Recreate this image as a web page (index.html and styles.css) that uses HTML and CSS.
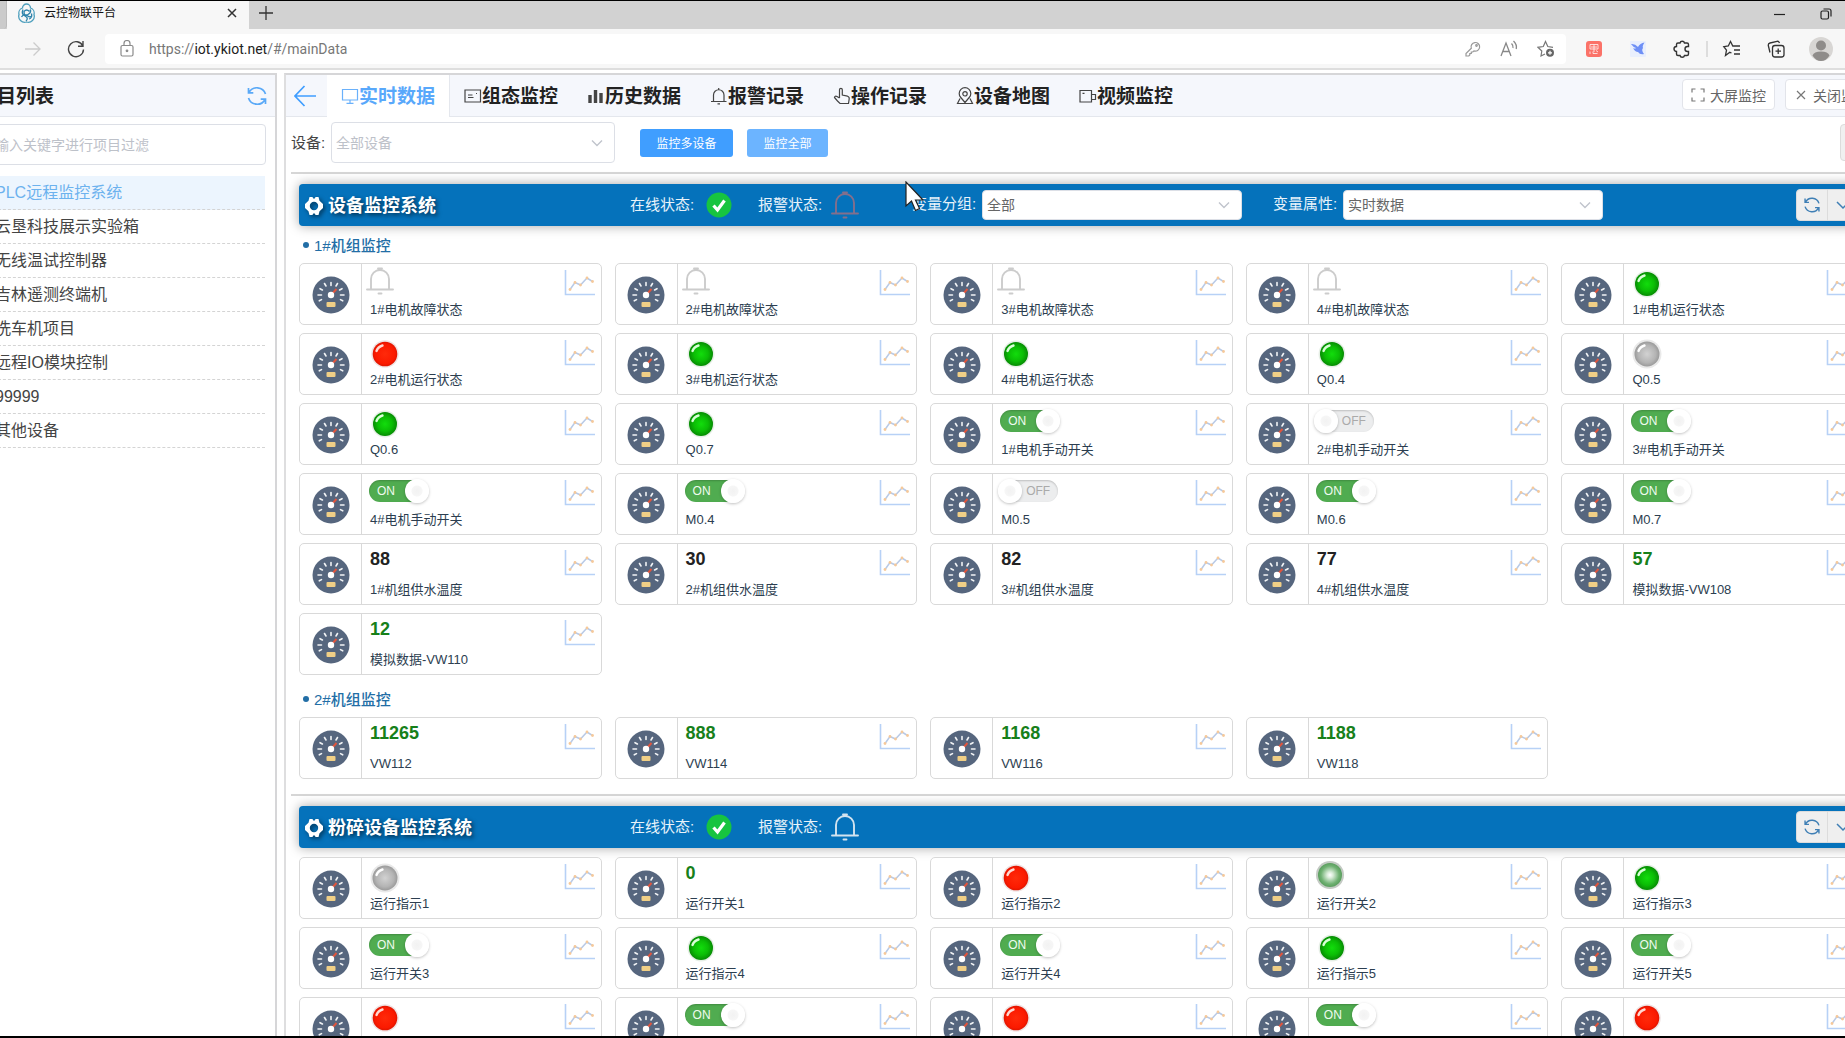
FILE: index.html
```html
<!DOCTYPE html>
<html lang="zh-CN">
<head>
<meta charset="utf-8">
<title>云控物联平台</title>
<link rel="stylesheet" href="styles.css">
</head>
<body>
<svg class="sprite" aria-hidden="true">
  <defs>
    <radialGradient id="g-green"><stop offset="0" stop-color="#12dd0c"/><stop offset=".6" stop-color="#0bbd05"/><stop offset="1" stop-color="#078c04"/></radialGradient>
    <radialGradient id="g-red"><stop offset="0" stop-color="#ff2a0a"/><stop offset=".8" stop-color="#fb1a00"/><stop offset="1" stop-color="#e01500"/></radialGradient>
    <radialGradient id="g-gray"><stop offset="0" stop-color="#d2d2d2"/><stop offset=".7" stop-color="#b4b4b4"/><stop offset="1" stop-color="#9a9a9a"/></radialGradient>
    <radialGradient id="g-soft"><stop offset="0" stop-color="#ffffff"/><stop offset=".25" stop-color="#d9ecd9"/><stop offset=".75" stop-color="#6fb172"/><stop offset="1" stop-color="#5a9e5e"/></radialGradient>
  </defs>
  <symbol id="gauge" viewBox="-19 -19 38 38">
    <circle r="18.500" fill="#56667e"/>
    <g stroke="#f2f4f6" stroke-width="1.600" stroke-linecap="round">
      <path d="M0-9.500V-12.500M-9.500 0H-13M9.500 0H13M-5-9L-6.500-11.500M5-9L6.500-11.500M-8.600-5L-11-6.300M8.600-5L11-6.300M-9.500 4.600L-11.700 5.800M9.500 4.600L11.700 5.800"/>
    </g>
    <path d="M0 0L5.500-6" stroke="#e0553d" stroke-width="2"/>
    <circle r="3.200" fill="#fff"/>
    <rect x="-4.500" y="7" width="9" height="5" rx="1" fill="#f0cf86"/>
  </symbol>
  <symbol id="trend" viewBox="0 0 31 26">
    <path d="M1.500 0V24.500H31" fill="none" stroke="#b7d1f6" stroke-width="1.600"/>
    <path d="M6 19.500L11 12.500L16.500 15L23 8L28.500 11.500" fill="none" stroke="#b9cae6" stroke-width="1.500"/>
    <g fill="#f6c99a"><circle cx="6" cy="19.500" r="1.400"/><circle cx="11" cy="12.500" r="1.400"/><circle cx="16.500" cy="15" r="1.400"/><circle cx="23" cy="8" r="1.400"/><circle cx="28.500" cy="11.500" r="1.400"/></g>
  </symbol>
  <symbol id="bell" viewBox="0 0 28 28">
    <path d="M5 22V12a9 9 0 0 1 18 0V22M1 22.500H27M12 1.500H16M12.500 26.500H15.500" fill="none" stroke="currentColor" stroke-width="1.900" stroke-linecap="round"/>
  </symbol>
  <symbol id="led-green" viewBox="0 0 30 30"><circle cx="15" cy="15" r="13.500" fill="#e6efe6"/><circle cx="15" cy="15" r="12" fill="url(#g-green)"/><path d="M6.500 12a9 9 0 0 1 6-5.500" fill="none" stroke="#d8ffd6" stroke-width="2.400" stroke-linecap="round"/></symbol>
  <symbol id="led-red" viewBox="0 0 30 30"><circle cx="15" cy="15" r="13.800" fill="#efe4e4"/><circle cx="15" cy="15" r="12.300" fill="url(#g-red)"/><path d="M6.500 12a9 9 0 0 1 6-5.500" fill="none" stroke="#ffd9d2" stroke-width="2.400" stroke-linecap="round"/></symbol>
  <symbol id="led-gray" viewBox="0 0 30 30"><circle cx="15" cy="15" r="14.500" fill="#e9e9e9"/><circle cx="15" cy="15" r="12.500" fill="url(#g-gray)"/><path d="M6.500 12a9 9 0 0 1 6-5.500" fill="none" stroke="#fff" stroke-width="2.400" stroke-linecap="round"/></symbol>
  <symbol id="led-soft" viewBox="0 0 30 30"><circle cx="15" cy="15" r="14" fill="#c3cac3"/><circle cx="15" cy="15" r="12" fill="url(#g-soft)"/></symbol>
  <symbol id="refresh" viewBox="0 0 22 22">
    <path d="M3 7.500A9 9 0 0 1 19.500 9M19 14.500A9 9 0 0 1 2.500 13M2.500 3V7.800H7.300M19.500 19V14.200H14.700" fill="none" stroke="currentColor" stroke-width="1.700"/>
  </symbol>
  <symbol id="gear" viewBox="0 0 20 20">
    <path fill="currentColor" fill-rule="evenodd" d="M5.500 1H8.500L9.200 2.600H10.800L11.500 1H14.500L15.500 4.800L19 8V12L15.500 15.200L14.500 19H11.500L10.800 17.400H9.200L8.500 19H5.500L4.500 15.200L1 12V8L4.500 4.800ZM10 5.800A4.200 4.200 0 1 0 10 14.200A4.200 4.200 0 1 0 10 5.800Z"/>
  </symbol>
  <symbol id="ok" viewBox="0 0 26 26"><circle cx="13" cy="13" r="12.500" fill="#17c440"/><path d="M7.500 13.500L11.500 18L18.500 8.500" fill="none" stroke="#fff" stroke-width="3.200"/></symbol>
  <symbol id="down" viewBox="0 0 16 16"><path d="M2 5L8 11L14 5" fill="none" stroke="currentColor" stroke-width="1.500"/></symbol>
</svg>

<header class="browser">
  <div class="tabstrip">
    <div class="prev-tab"></div>
    <div class="tab">
      <svg width="17" height="20" viewBox="0 0 17 20" fill="none" stroke="#4d9fbd" stroke-width="1.300"><path d="M8.500 1A4 4 0 0 1 12.500 5A5.500 5.500 0 0 1 16 11.500A6 6 0 0 1 8.500 19A6 6 0 0 1 1 11.500A5.500 5.500 0 0 1 4.500 5A4 4 0 0 1 8.500 1Z"/><path d="M5 6.500Q3 11 7 13T8 18M12 6.500Q14 9 10 11.500T6 8.500Q8.500 5.500 11.500 8.500M13.500 10.500Q14.500 15 11 16M3.500 14Q6 10 9 12.500T12.500 13" stroke="#2f83ab"/></svg>
      <span class="tab-title">云控物联平台</span>
      <button class="icon-btn" type="button" aria-label="关闭标签页"><svg width="10" height="10" viewBox="0 0 10 10" stroke="#333" stroke-width="1.500"><path d="M1 1L9 9M9 1L1 9"/></svg></button>
    </div>
    <button class="icon-btn new-tab" type="button" aria-label="新建标签页"><svg width="16" height="16" viewBox="0 0 16 16" stroke="#333" stroke-width="1.300"><path d="M8 1V15M1 8H15"/></svg></button>
    <div class="window-buttons">
      <button class="icon-btn" type="button" aria-label="最小化"><svg width="12" height="12" viewBox="0 0 12 12" stroke="#222" stroke-width="1.200"><path d="M0 6.500H11"/></svg></button>
      <button class="icon-btn" type="button" aria-label="还原"><svg width="12" height="12" viewBox="0 0 12 12" fill="none" stroke="#222" stroke-width="1.200"><rect x="1" y="3" width="7.500" height="8" rx="1.500"/><path d="M3.500 1H9A2 2 0 0 1 11 3V8.500"/></svg></button>
    </div>
  </div>
  <div class="toolbar">
    <button class="icon-btn forward" type="button" aria-label="前进"><svg width="18" height="18" viewBox="0 0 18 18" fill="none" stroke="#ccc" stroke-width="1.300"><path d="M1 9H16M9.500 2.500L16 9L9.500 15.500"/></svg></button>
    <button class="icon-btn reload" type="button" aria-label="刷新"><svg width="18" height="18" viewBox="0 0 18 18" fill="none" stroke="#444" stroke-width="1.400"><path d="M15.800 6A7.500 7.500 0 1 0 16.500 9.500M16 1V6.200H11"/></svg></button>
    <div class="address">
      <svg width="14" height="17" viewBox="0 0 14 17" fill="none" stroke="#8a8a8a" stroke-width="1.200"><rect x="1" y="5.500" width="12" height="10.500" rx="1.500"/><path d="M4 5.500V3.500A3 3 0 0 1 10 3.500V5.500"/><circle cx="7" cy="10.800" r=".8" fill="#8a8a8a"/></svg>
      <a class="url" href="#/mainData">https://<b>iot.ykiot.net</b>/#/mainData</a>
      <div class="address-tools">
        <svg width="16" height="16" viewBox="0 0 16 16" fill="none" stroke="#999" stroke-width="1.200"><path d="M6.300 7.300A4.300 4.300 0 1 1 9 9.900L7.800 11H6.300V12.500H4.800V14L3.800 15H1V12.500Z"/><circle cx="11.500" cy="4.500" r=".8"/></svg>
        <svg width="18" height="18" viewBox="0 0 18 18" fill="none" stroke="#888" stroke-width="1.300"><path d="M1 16L6 3L11 16M2.800 11.500H9.200M11.500 3.500Q13.500 5.500 13 8M13.500 1Q17.200 4.500 16.200 9"/></svg>
        <svg width="18" height="18" viewBox="0 0 18 18" fill="none" stroke="#777" stroke-width="1.200"><path d="M8 14L4 16L4.800 11L1 7.300L6.300 6.500L8.500 1.500L10.800 6.500L16 7.300"/><circle cx="13" cy="12.800" r="4" fill="#666" stroke="none"/><path d="M13 10.800V14.800M11 12.800H15" stroke="#fff"/></svg>
      </div>
    </div>
    <div class="extensions">
      <svg width="24" height="24" viewBox="0 0 24 24"><rect x="4" y="4" width="16" height="16" rx="3" fill="#fb7268"/><path d="M8 7.500H16V12H8ZM12 7.500V15M8 14.500V17M11 14.500V16.500H15.500M14 13.500L16 15M9 10H15" fill="none" stroke="#fff" opacity=".75"/></svg>
      <svg width="24" height="24" viewBox="0 0 24 24"><rect x="4" y="4" width="16" height="16" rx="1" fill="#e9effd"/><path d="M5 7Q9 6.500 12 10Q14 6 18.500 5.500Q16 9 17 11Q15 13 18 17Q14 18 12 15Q9 15 7 11Q9 12 10 11Q7.500 10.500 5 7Z" fill="#6e8ff6"/></svg>
      <svg width="24" height="24" viewBox="0 0 24 24" fill="none" stroke="#333" stroke-width="1.400"><path d="M8 6H10A2.300 2.300 0 0 1 14.500 6H17Q18.500 6 18.500 7.500V9.500H17.500A2.400 2.400 0 0 0 17.500 14.500H18.500V17Q18.500 18.500 17 18.500H14.500A2.300 2.300 0 0 1 10 18.500H8Q6.500 18.500 6.500 17V14.500A2.400 2.400 0 0 1 6.500 9.500V7.500Q6.500 6 8 6Z"/></svg>
      <i class="tool-sep"></i>
      <svg width="24" height="24" viewBox="0 0 24 24" fill="none" stroke="#333" stroke-width="1.300"><path d="M11.500 16L9.800 15.300L5.500 18.500L6.500 13.200L3.800 9.700L8.300 9L10.500 4.500L12.800 9H20M14 13H20M14 17H20"/></svg>
      <svg width="24" height="24" viewBox="0 0 24 24" fill="none" stroke="#333" stroke-width="1.300"><rect x="8.500" y="8.500" width="11.500" height="11.500" rx="2.500"/><path d="M14.200 11.500V17M11.500 14.200H17M6 15.500L4.300 8.500Q4 6.500 6 6L13 4.300Q15 4 15.500 6"/></svg>
      <svg width="26" height="26" viewBox="0 0 26 26"><circle cx="13" cy="13" r="12" fill="#d8d6d4"/><circle cx="13" cy="9.500" r="5" fill="#8f8c8a"/><path d="M4.500 19.500Q6 15.500 13 15.500T21.500 19.500Q18 25 13 25T4.500 19.500Z" fill="#8f8c8a"/></svg>
    </div>
  </div>
</header>

<div class="app">
  <aside class="sidebar">
    <div class="side-head">
      <h1>项目列表</h1>
      <button class="icon-btn side-refresh" type="button" aria-label="刷新项目"><svg width="22" height="22"><use href="#refresh"/></svg></button>
    </div>
    <input class="side-search" type="text" placeholder="请输入关键字进行项目过滤" aria-label="项目过滤">
    <ul class="projects">
      <li class="current"><a href="#/p1">PLC远程监控系统</a></li>
      <li><a href="#/p2">云垦科技展示实验箱</a></li>
      <li><a href="#/p3">无线温试控制器</a></li>
      <li><a href="#/p4">吉林遥测终端机</a></li>
      <li><a href="#/p5">洗车机项目</a></li>
      <li><a href="#/p6">远程IO模块控制</a></li>
      <li><a href="#/p7">99999</a></li>
      <li><a href="#/p8">其他设备</a></li>
    </ul>
  </aside>

  <main class="main">
    <div class="main-head">
      <button class="icon-btn back" type="button" aria-label="返回"><svg width="22" height="22" viewBox="0 0 22 22" fill="none" stroke="#409eff" stroke-width="1.700"><path d="M22 11H1M10.500 1L1 11L10.500 21"/></svg></button>
      <nav class="tabs">
        <a class="active" href="#/mainData"><svg viewBox="0 0 18 18"><path d="M1.500 2.500H16.500V13H1.500ZM9 13V16M5.500 16.300H12.500"/></svg>实时数据</a>
        <a href="#/scada"><svg viewBox="0 0 18 18"><path d="M1 3H16.500V15H1ZM4 8H8.500M4 10.500H9.500M12 6.500H13"/></svg>组态监控</a>
        <a href="#/history"><svg viewBox="0 0 18 18"><path d="M3 8V16M8.500 3V16M14 6V16" stroke-width="3.400"/></svg>历史数据</a>
        <a href="#/alarm"><svg viewBox="0 0 18 18"><path d="M3.500 14V8A5.200 5.200 0 0 1 14 8V14M1 14.500H16.500M8.700 1V3M7.500 16.800H10"/></svg>报警记录</a>
        <a href="#/log"><svg viewBox="0 0 18 18"><path d="M6.500 11V2.800A1.400 1.400 0 0 1 9.300 2.800V8L14.500 9.200Q16.500 9.800 16.200 11.800L15.500 16.500H7L4.500 14L1.500 10.500Q2 8.500 4 9.500L6.500 11"/></svg>操作记录</a>
        <a href="#/map"><svg viewBox="0 0 18 18"><path d="M9 15.500L4.800 10.500A5.800 5.800 0 1 1 13.200 10.500ZM4 11.500L1.500 16.500H16.500L14 11.500"/><circle cx="9" cy="6.800" r="2.200"/></svg>设备地图</a>
        <a href="#/video"><svg viewBox="0 0 18 18"><path d="M1 3.500H12.500V15H1ZM12.500 7.500H16.500V12.500H12.500M3.500 6.300H5.500"/></svg>视频监控</a>
      </nav>
      <div class="head-actions">
        <button class="plain" type="button"><svg width="14" height="14" viewBox="0 0 14 14" fill="none" stroke="#777" stroke-width="1.200"><path d="M1 4.500V1H4.500M9.500 1H13V4.500M13 9.500V13H9.500M4.500 13H1V9.500"/></svg>大屏监控</button>
        <button class="plain" type="button"><svg width="14" height="14" viewBox="0 0 14 14" fill="none" stroke="#777" stroke-width="1.200"><path d="M3 3L11 11M11 3L3 11"/></svg>关闭监控</button>
      </div>
    </div>

    <div class="filter">
      <label for="device">设备:</label>
      <select id="device" class="select placeholder"><option>全部设备</option></select>
      <button class="primary" type="button">监控多设备</button>
      <button class="primary soft" type="button">监控全部</button>
      <button class="more" type="button" aria-label="更多"></button>
    </div>

    <section class="device">
      <div class="band">
        <h2><svg width="20" height="20"><use href="#gear"/></svg>设备监控系统</h2>
        <span class="state online">在线状态:<svg width="26" height="26"><use href="#ok"/></svg></span>
        <span class="state alarm ringing">报警状态:<svg width="28" height="28"><use href="#bell"/></svg></span>
        <label for="group">变量分组:</label>
        <select id="group" class="select"><option>全部</option></select>
        <label class="second" for="kind">变量属性:</label>
        <select id="kind" class="select"><option>实时数据</option></select>
        <div class="band-buttons">
          <button type="button" aria-label="刷新"><svg width="18" height="18"><use href="#refresh"/></svg></button>
          <button type="button" aria-label="展开"><svg width="16" height="16"><use href="#down"/></svg></button>
        </div>
      </div>
      <h3>1#机组监控</h3>
      <div class="cards" data-group="unit1"></div>
      <h3>2#机组监控</h3>
      <div class="cards" data-group="unit2"></div>
    </section>

    <section class="device">
      <div class="band">
        <h2><svg width="20" height="20"><use href="#gear"/></svg>粉碎设备监控系统</h2>
        <span class="state online">在线状态:<svg width="26" height="26"><use href="#ok"/></svg></span>
        <span class="state alarm">报警状态:<svg width="28" height="28"><use href="#bell"/></svg></span>
        <div class="band-buttons">
          <button type="button" aria-label="刷新"><svg width="18" height="18"><use href="#refresh"/></svg></button>
          <button type="button" aria-label="展开"><svg width="16" height="16"><use href="#down"/></svg></button>
        </div>
      </div>
      <div class="cards ungrouped" data-group="crusher"></div>
    </section>
  </main>
</div>

<svg class="cursor" width="20" height="32" viewBox="0 0 20 32" aria-hidden="true"><path d="M1 1V25L6.500 20L10.500 29.500L14.500 27.500L10.500 19H18Z" fill="#fff" stroke="#222" stroke-width="1.200"/></svg>
<script src="cards.js"></script>
</body>
</html>
```

FILE: cards.js
```js
// Each entry is [kind, label, value]; kinds: bell, led, switch, num
const groups = {
  unit1: [
    ['bell', '1#电机故障状态'], ['bell', '2#电机故障状态'], ['bell', '3#电机故障状态'], ['bell', '4#电机故障状态'], ['led', '1#电机运行状态', 'green'],
    ['led', '2#电机运行状态', 'red'], ['led', '3#电机运行状态', 'green'], ['led', '4#电机运行状态', 'green'], ['led', 'Q0.4', 'green'], ['led', 'Q0.5', 'gray'],
    ['led', 'Q0.6', 'green'], ['led', 'Q0.7', 'green'], ['switch', '1#电机手动开关', true], ['switch', '2#电机手动开关', false], ['switch', '3#电机手动开关', true],
    ['switch', '4#电机手动开关', true], ['switch', 'M0.4', true], ['switch', 'M0.5', false], ['switch', 'M0.6', true], ['switch', 'M0.7', true],
    ['num', '1#机组供水温度', 88, 'dark'], ['num', '2#机组供水温度', 30, 'dark'], ['num', '3#机组供水温度', 82, 'dark'], ['num', '4#机组供水温度', 77, 'dark'], ['num', '模拟数据-VW108', 57],
    ['num', '模拟数据-VW110', 12]
  ],
  unit2: [
    ['num', 'VW112', 11265], ['num', 'VW114', 888], ['num', 'VW116', 1168], ['num', 'VW118', 1188]
  ],
  crusher: [
    ['led', '运行指示1', 'gray'], ['num', '运行开关1', 0], ['led', '运行指示2', 'red'], ['led', '运行开关2', 'soft'], ['led', '运行指示3', 'green'],
    ['switch', '运行开关3', true], ['led', '运行指示4', 'green'], ['switch', '运行开关4', true], ['led', '运行指示5', 'green'], ['switch', '运行开关5', true],
    ['led', '运行指示6', 'red'], ['switch', '运行开关6', true], ['led', '运行指示7', 'red'], ['switch', '运行开关7', true], ['led', '运行指示8', 'red']
  ]
};

const render = {
  bell: () => '<svg class="bell" width="28" height="28"><use href="#bell"/></svg>',
  led: (label, color) => `<svg class="led ${color}" width="30" height="30"><use href="#led-${color}"/></svg>`,
  switch: (label, on) => `<label class="switch"><input type="checkbox" aria-label="${label}"${on ? ' checked' : ''}><span>${on ? 'ON' : 'OFF'}</span></label>`,
  num: (label, value, tone) => `<strong class="num ${tone || ''}">${value}</strong>`
};

document.querySelectorAll('.cards').forEach(box => {
  box.innerHTML = groups[box.dataset.group].map(([kind, label, value, tone]) => `
    <article class="card">
      <div class="card-icon"><svg width="38" height="38"><use href="#gauge"/></svg></div>
      <div class="card-body">
        <div class="reading">${render[kind](label, value, tone)}</div>
        <p>${label}</p>
      </div>
      <a class="trend" href="#/history" aria-label="${label} 趋势"><svg width="31" height="26"><use href="#trend"/></svg></a>
    </article>`).join('');
});
```

FILE: styles.css
```css
* { box-sizing: border-box; }

body {
  margin: 0;
  height: 100vh;
  display: flex;
  flex-direction: column;
  overflow: hidden;
  border-top: 1px solid #000;
  border-bottom: 2px solid #000;
  background: #fff;
  color: #303133;
  font-family: "Liberation Sans", "Noto Sans CJK SC", sans-serif;
}

h1, h2, h3, p, ul { margin: 0; padding: 0; }
button, input, select { font: inherit; }
a { color: inherit; text-decoration: none; }
svg { flex: none; display: block; }
.sprite { width: 0; height: 0; position: absolute; }
.icon-btn { display: flex; padding: 0; border: 0; background: none; }

/* Browser chrome */
.browser { flex: none; border-bottom: 2px solid #dedede; }
.tabstrip { display: flex; height: 28px; background: #d2d2d2; }
.prev-tab { width: 7px; border-right: 1px solid #bbb; background: #cbcbcb; border-radius: 0 0 4px 0; }
.tab { display: flex; align-items: center; width: 242px; padding: 0 12px 4px 11px; background: #f7f7f7; }
.tab-title { flex: 1; padding-left: 9px; font-size: 12px; line-height: 18px; color: #111; }
.new-tab { align-items: center; margin-left: 9px; padding-bottom: 4px; }
.window-buttons { display: flex; align-items: center; gap: 34px; margin-left: auto; padding: 0 13px 3px 0; }
.toolbar { display: flex; align-items: center; height: 39px; padding: 0 11px 0 24px; background: #f7f7f7; }
.reload { margin-left: 25px; }
.address { flex: 1; display: flex; align-items: center; height: 30px; margin-left: 20px; padding: 0 11px 0 15px; border-radius: 4px; background: #fff; }
.url { margin-left: 15px; font: 14px Roboto, "Noto Sans", sans-serif; color: #777; }
.url b { font-weight: 400; color: #222; }
.address-tools { display: flex; align-items: center; gap: 19px; margin-left: auto; }
.extensions { display: flex; align-items: center; gap: 20px; margin-left: 16px; }
.tool-sep { width: 2px; height: 16px; margin: 0 -8px; background: #ddd; }

/* Two panels; both run past the window edges */
.app { flex: 1; min-height: 0; display: flex; gap: 7px; margin: 3px -40px 0 -24px; }
.sidebar { flex: none; width: 301px; border: 2px solid #d6d6d8; border-bottom: 0; }
.main { flex: 1; min-width: 0; border: 2px solid #d6d6d8; border-bottom: 0; border-left-color: #dededf; }

.side-head { display: flex; align-items: center; justify-content: space-between; height: 42px; padding: 0 7px 0 0; border-bottom: 1px solid #e4e7ed; background: #f5f7fc; }
.side-head h1 { padding-top: 2px; font-size: 19px; line-height: 28px; color: #222; }
.side-refresh { color: #5aa9f7; }
.side-search { display: block; width: 310px; height: 41px; margin: 7px 0 0 -22px; padding: 0 24px; border: 1px solid #dcdfe6; border-radius: 4px; font-size: 14px; }
.side-search::placeholder { color: #bdc1c9; opacity: 1; }
.projects { margin: 11px 10px 0 0; list-style: none; }
.projects li { border-bottom: 1px dashed #d4d4d4; font-size: 16px; line-height: 32px; color: #444; }
.projects a { display: block; margin-left: -7px; padding: 1px 0 0 24px; }
.projects .current { background: #ecf5fe; color: #6cb2ee; }

.main-head { display: flex; height: 42px; border-bottom: 1px solid #e4e7ed; background: #f5f7fc; }
.back { align-items: center; width: 41px; padding-left: 8px; }
.tabs { display: flex; height: 42px; }
.tabs a { display: flex; align-items: center; padding: 2px 15px 0 14px; font-size: 19px; font-weight: 700; line-height: 28px; color: #222; white-space: nowrap; }
.tabs svg { width: 18px; height: 18px; margin-bottom: 3px; fill: none; stroke: #444; stroke-width: 1.2px; }
.tabs .active { border-right: 1px solid #e4e7ed; background: #fff; color: #58a8fb; padding-right: 14px; }
.tabs .active svg { stroke: #6ab1fb; }
.head-actions { display: flex; align-items: flex-start; gap: 10px; margin-left: auto; padding: 4px 5px 0 0; }
.plain { display: flex; align-items: center; justify-content: center; gap: 5px; width: 93px; height: 31px; padding: 0; border: 1px solid #e2e4ea; border-radius: 4px; background: #fff; font-size: 14px; color: #666; white-space: nowrap; }

.filter { display: flex; align-items: center; height: 55px; padding: 0 7px 4px 5px; }
.filter label { width: 40px; padding-bottom: 2px; font-size: 15px; color: #444; }
.select {
  appearance: none;
  width: 260px;
  height: 30px;
  padding: 0 12px;
  padding-left: 4px;
  border: 1px solid #dcdfe6;
  border-radius: 4px;
  color: #666;
  font-size: 14px;
  background: #fff url("data:image/svg+xml,%3Csvg xmlns='http://www.w3.org/2000/svg' width='14' height='14' fill='none' stroke='%23c0c4cc' stroke-width='1.400'%3E%3Cpath d='M2 4.500L7 9.500L12 4.500'/%3E%3C/svg%3E") no-repeat right 10px center;
}
.filter .select { width: 284px; height: 41px; color: #bdc1c9; }
.primary { width: 93px; height: 28px; margin-left: 25px; padding: 0; border: 0; border-radius: 3px; background: #409eff; color: #fff; font-size: 12px; }
.primary.soft { width: 81px; margin-left: 14px; background: #6cb4ff; }
.more { width: 36px; height: 37px; margin-left: auto; border: 1px solid #dcdcdc; border-radius: 4px; background: #f0f0f0; }

/* Device sections */
.device { margin: 0 0 15px 5px; padding: 10px 19px 0 8px; border-top: 2px solid #d6d6d6; }
.band { display: flex; align-items: center; height: 42px; padding: 0 5px; border-radius: 4px; background: #0572bb; box-shadow: 0 0 12px rgba(0, 0, 0, .35); color: #e8f3fa; font-size: 15px; line-height: 22px; white-space: nowrap; }
.band h2 { display: flex; align-items: center; gap: 4px; width: 326px; padding-top: 2px; font-size: 18px; line-height: 26px; color: #fff; text-shadow: 2px 2px 4px rgba(0, 0, 0, .6); }
.band h2 svg { filter: drop-shadow(2px 2px 2px rgba(0, 0, 0, .5)); }
.state { display: flex; align-items: center; }
.online { gap: 12px; width: 128px; }
.alarm { gap: 9px; width: 154px; }
.alarm svg { color: #d3e3ef; }
.ringing svg { color: #836f8c; }
.band label { width: 70px; padding-bottom: 2px; }
.band .second { margin-left: 31px; }
.band-buttons { display: flex; margin-left: auto; }
.band-buttons button { display: flex; align-items: center; justify-content: center; width: 32px; height: 32px; padding: 0; border: 1px solid #dcdcdc; background: #efefef; color: #3f7fb5; }
.band-buttons button:first-child { border-radius: 4px 0 0 4px; }
.band-buttons button:last-child { margin-left: -1px; border-radius: 0 4px 4px 0; }

.device h3 { display: flex; align-items: center; gap: 5px; height: 37px; padding-left: 4px; font-size: 15px; font-weight: 500; color: #226ea6; }
.device h3::before { content: ""; width: 6px; height: 6px; border-radius: 3px; background: #226ea6; }
.cards + h3 { margin-top: 5px; }

.cards { display: grid; grid-template-columns: repeat(5, 1fr); gap: 8px 13px; }
.ungrouped { margin-top: 9px; }
.card { display: flex; height: 62px; border: 1px solid #d9d9d9; border-radius: 5px; background: #fff; }
.card-icon { display: flex; align-items: center; justify-content: center; width: 62px; padding-top: 2px; border-right: 1px solid #d9d9d9; }
.card-body { flex: 1; min-width: 0; padding: 1px 0 0 8px; }
.card-body p { font-size: 13px; line-height: 18px; color: #2c3e50; white-space: nowrap; }
.reading { height: 36px; display: flex; align-items: flex-start; }
.bell { margin: 2px 0 0 -4px; color: #ccc; }
.led { margin: 4px 0 0; }
.led.soft { margin: 1px 0 0 -2px; }
.num { padding-top: 4px; font-size: 18px; line-height: 20px; color: #17801a; }
.num.dark { color: #222; }
.trend { padding: 6px 6px 0 0; }

.switch { position: relative; display: flex; align-items: center; width: 58px; height: 22px; margin: 5px 0 0 -1px; }
.switch input {
  appearance: none;
  position: absolute;
  inset: 0;
  margin: 0;
  border-radius: 11px;
  background: #ecedee;
  box-shadow: inset 0 1px 2px rgba(0, 0, 0, .2);
}
.switch input::before {
  content: "";
  position: absolute;
  top: -1px;
  left: -2px;
  width: 24px;
  height: 24px;
  border-radius: 12px;
  background: radial-gradient(circle, #f2f2f2 0, #f6f6f6 5px, #fff 6px);
  box-shadow: 0 1px 3px rgba(0, 0, 0, .25);
}
.switch input:checked { background: #50ac50; }
.switch input:checked::before { left: 36px; }
.switch span { position: relative; padding-left: 26px; font-size: 12px; line-height: 24px; color: #aaa; }
.switch input:checked + span { padding-left: 8px; color: #effbef; }

.cursor { position: absolute; left: 905px; top: 181px; pointer-events: none; }
```
